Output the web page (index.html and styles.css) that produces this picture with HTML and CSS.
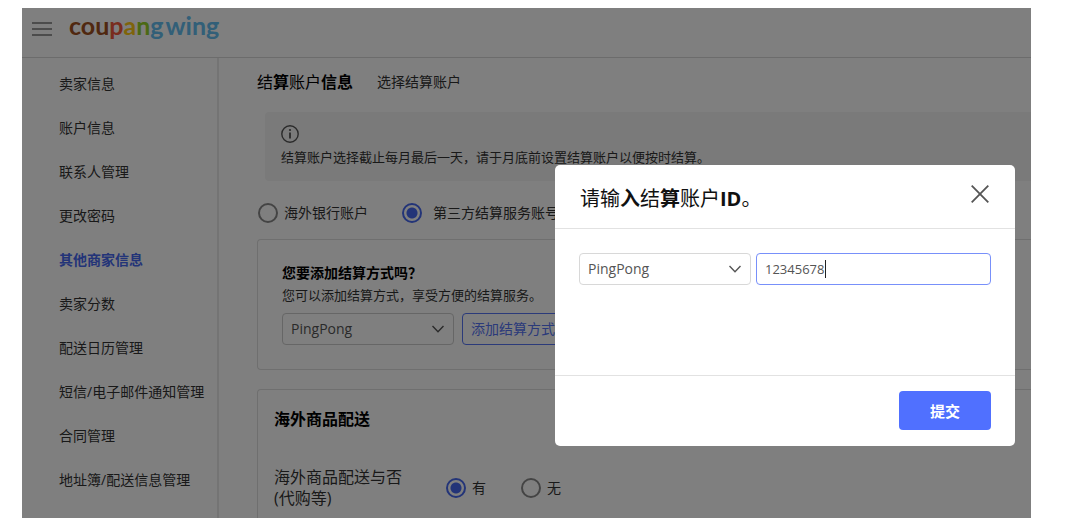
FILE: index.html
```html
<!DOCTYPE html>
<html lang="zh-CN">
<head>
<meta charset="utf-8">
<meta name="viewport" content="width=device-width, initial-scale=1">
<title>Coupang Wing</title>
<link rel="stylesheet" href="styles.css">
</head>
<body>
<div class="app">
  <header class="topbar">
    <button class="menu-button" type="button" aria-label="菜单">
      <svg width="20" height="16" viewBox="0 0 20 16" fill="none" stroke="currentColor" stroke-width="1.5"><path d="M0 2h20M0 8h20M0 14h20"/></svg>
    </button>
    <a class="logo" href="#" aria-label="coupang wing"><span class="logo-brown">cou</span><span class="logo-red">p</span><span class="logo-yellow">a</span><span class="logo-green">n</span><span class="logo-blue">g</span><span class="logo-blue logo-wing">wing</span></a>
  </header>

  <div class="layout">
    <nav class="sidebar">
      <a href="#">卖家信息</a>
      <a href="#">账户信息</a>
      <a href="#">联系人管理</a>
      <a href="#">更改密码</a>
      <a href="#" class="active" aria-current="page">其他商家信息</a>
      <a href="#">卖家分数</a>
      <a href="#">配送日历管理</a>
      <a href="#">短信/电子邮件通知管理</a>
      <a href="#">合同管理</a>
      <a href="#">地址簿/配送信息管理</a>
    </nav>

    <main class="content">
      <div class="title-row">
        <h1><span class="light">结</span>算<span class="light">账户</span>信息</h1>
        <span>选择结算账户</span>
      </div>

      <section class="notice">
        <svg width="18" height="18" viewBox="0 0 18 18" fill="none" stroke="currentColor"><circle cx="9" cy="9" r="8.2" stroke-width="1.4"/><path d="M9 7.6v5.8" stroke-width="1.8"/><circle cx="9" cy="5" r="1.1" fill="currentColor" stroke="none"/></svg>
        <p>结算账户选择截止每月最后一天，请于月底前设置结算账户以便按时结算。</p>
      </section>

      <div class="radio-row account-type">
        <label class="radio"><input type="radio" name="account">海外银行账户</label>
        <label class="radio third-party"><input type="radio" name="account" checked>第三方结算服务账号</label>
      </div>

      <section class="card method">
        <h2>您要添加结算方式吗？</h2>
        <p>您可以添加结算方式，享受方便的结算服务。</p>
        <div class="method-row">
          <div class="select">
            <select aria-label="结算方式"><option>PingPong</option></select>
            <svg width="12" height="8" viewBox="0 0 12 8" fill="none" stroke="currentColor" stroke-width="1.4"><path d="M.5 1 6 6.8 11.5 1"/></svg>
          </div>
          <button class="outline-button" type="button">添加结算方式</button>
        </div>
      </section>

      <section class="card shipping">
        <h2>海外商品配送</h2>
        <div class="shipping-row">
          <div class="shipping-label">海外商品配送与否<br>(代购等)</div>
          <div class="radio-row">
            <label class="radio"><input type="radio" name="overseas" checked>有</label>
            <label class="radio"><input type="radio" name="overseas">无</label>
          </div>
        </div>
      </section>
    </main>
  </div>

  <div class="overlay">
    <div class="modal" role="dialog" aria-modal="true" aria-labelledby="modal-title">
      <div class="modal-header">
        <h2 id="modal-title"><span class="light">请输</span>入<span class="light">结</span>算<span class="light">账户</span>ID<span class="light">。</span></h2>
        <button class="close-button" type="button" aria-label="关闭">
          <svg width="18" height="18" viewBox="0 0 18 18" fill="none" stroke="currentColor" stroke-width="1.8"><path d="m.7.7 16.6 16.6M17.3.7.7 17.3"/></svg>
        </button>
      </div>
      <div class="modal-body">
        <div class="select">
          <select aria-label="结算服务"><option>PingPong</option></select>
          <svg width="12" height="8" viewBox="0 0 12 8" fill="none" stroke="currentColor" stroke-width="1.4"><path d="M.5 1 6 6.8 11.5 1"/></svg>
        </div>
        <div class="id-field">
          <input type="text" value="12345678" aria-label="结算账户ID">
          <span class="caret"></span>
        </div>
      </div>
      <div class="modal-footer">
        <button class="submit-button" type="button">提交</button>
      </div>
    </div>
  </div>
</div>
</body>
</html>
```

FILE: styles.css
```css
* {
  box-sizing: border-box;
}

body {
  margin: 0;
  padding: 8px 49px 13px 22px;
  background: #fff;
  color: #333;
  font: 14px/20px "Open Sans", "Noto Sans CJK SC", sans-serif;
}

h1, h2, p {
  margin: 0;
}

button, input, select {
  font: inherit;
  margin: 0;
}

a {
  color: inherit;
  text-decoration: none;
}

svg {
  display: block;
}

.light {
  font-weight: 400;
}

.app {
  position: relative;
  height: calc(100vh - 21px);
  overflow: hidden;
  display: flex;
  flex-direction: column;
}

.topbar {
  flex: none;
  display: flex;
  align-items: flex-start;
  gap: 17px;
  height: 50px;
  padding: 0 10px;
  border-bottom: 1px solid #d8d8d8;
}

.menu-button {
  margin-top: 13px;
  padding: 0;
  border: 0;
  background: none;
  color: #777;
}

.logo {
  display: flex;
  font: bold 25px/34px "Lato", sans-serif;
}

.logo-wing {
  margin-left: 2px;
}

.logo-brown { color: #a05020; }
.logo-red { color: #f25a3c; }
.logo-yellow { color: #ffc814; }
.logo-green { color: #96d228; }
.logo-blue { color: #64bef0; }

.layout {
  flex: none;
  display: flex;
}

.sidebar {
  flex: none;
  width: 197px;
  padding-top: 4px;
  border-right: 2px solid #e8e8e8;
}

.sidebar a {
  display: block;
  padding-left: 37px;
  line-height: 44px;
  white-space: nowrap;
}

.sidebar .active {
  color: #4668f0;
  font-weight: 700;
}

.content {
  flex: 1;
  min-width: 0;
  padding: 12px 0 0 38px;
}

.title-row {
  display: flex;
  align-items: center;
  gap: 24px;
  line-height: 24px;
}

.title-row h1 {
  font-size: 16px;
  line-height: 24px;
  color: #000;
}

.notice {
  margin: 18px 0 0 8px;
  padding: 13px 16px 14px;
  border-radius: 4px 0 0 4px;
  background: #f4f4f4;
}

.notice svg {
  color: #555;
}

.notice p {
  margin-top: 4px;
  font-size: 13px;
}

.radio-row {
  display: flex;
  align-items: center;
}

.radio {
  display: flex;
  align-items: center;
  gap: 6px;
}

.radio input {
  appearance: none;
  width: 20px;
  height: 20px;
  border: 2px solid #888;
  border-radius: 50%;
  background: transparent;
}

.radio input:checked {
  border-color: #4668f0;
  background: radial-gradient(circle, #4668f0 5px, transparent 6px);
}

.account-type {
  gap: 34px;
  margin-top: 22px;
  padding-left: 1px;
}

.account-type .third-party {
  gap: 11px;
}

.card {
  border: 1px solid #dedede;
  border-right: 0;
  border-radius: 4px 0 0 4px;
}

.card h2 {
  color: #000;
}

.method {
  margin-top: 16px;
  padding: 22px 24px 24px;
}

.method h2 {
  font-size: 14px;
  line-height: 22px;
}

.method p {
  font-size: 13px;
  line-height: 22px;
}

.method-row {
  display: flex;
  gap: 8px;
  margin-top: 7px;
}

.select {
  position: relative;
  flex: none;
  width: 172px;
}

.select select {
  appearance: none;
  display: block;
  width: 100%;
  height: 32px;
  padding: 0 32px 0 8px;
  border: 1px solid #ccc;
  border-radius: 4px;
  background: transparent;
  color: #555;
}

.select svg {
  position: absolute;
  right: 10px;
  top: 12px;
  color: #555;
  pointer-events: none;
}

.outline-button {
  height: 32px;
  padding: 0 8px;
  border: 1px solid #5674f5;
  border-radius: 4px;
  background: transparent;
  color: #5674f5;
}

.shipping {
  margin-top: 19px;
  padding: 17px 16px 24px;
}

.shipping h2 {
  font-size: 16px;
  line-height: 24px;
}

.shipping-row {
  display: flex;
  align-items: center;
  margin-top: 36px;
}

.shipping-label {
  width: 172px;
  font-size: 16px;
  line-height: 21px;
}

.shipping-row .radio-row {
  gap: 35px;
}

.overlay {
  position: absolute;
  inset: 0;
  display: flex;
  align-items: flex-start;
  justify-content: flex-end;
  padding: 157px 16px 0;
  background: rgba(0, 0, 0, 0.5);
}

.modal {
  width: 460px;
  border-radius: 5px;
  background: #fff;
}

.modal-header {
  display: flex;
  align-items: flex-start;
  justify-content: space-between;
  padding: 20px 26px 15px 25px;
  border-bottom: 1px solid #e2e2e2;
}

.modal-header h2 {
  font-size: 20px;
  line-height: 28px;
  color: #111;
}

.close-button {
  padding: 0;
  border: 0;
  background: none;
  color: #555;
}

.modal-body {
  display: flex;
  gap: 5px;
  padding: 24px 24px 90px;
}

.modal-body select {
  border-color: #d8d8d8;
}

.id-field {
  position: relative;
  flex: 1;
}

.id-field input {
  display: block;
  width: 100%;
  height: 32px;
  padding: 0 8px;
  border: 1px solid #7890fa;
  border-radius: 4px;
  outline: 0;
  background: #fff;
  color: #555;
  font-size: 13px;
}

.caret {
  position: absolute;
  left: 69px;
  top: 7px;
  width: 1px;
  height: 18px;
  background: #222;
}

.modal-footer {
  display: flex;
  justify-content: flex-end;
  padding: 15px 24px 16px;
  border-top: 1px solid #e2e2e2;
}

.submit-button {
  height: 39px;
  padding: 0 31px;
  border: 0;
  border-radius: 4px;
  background: #5070ff;
  color: #fff;
  font-size: 15px;
  font-weight: 700;
}
```
